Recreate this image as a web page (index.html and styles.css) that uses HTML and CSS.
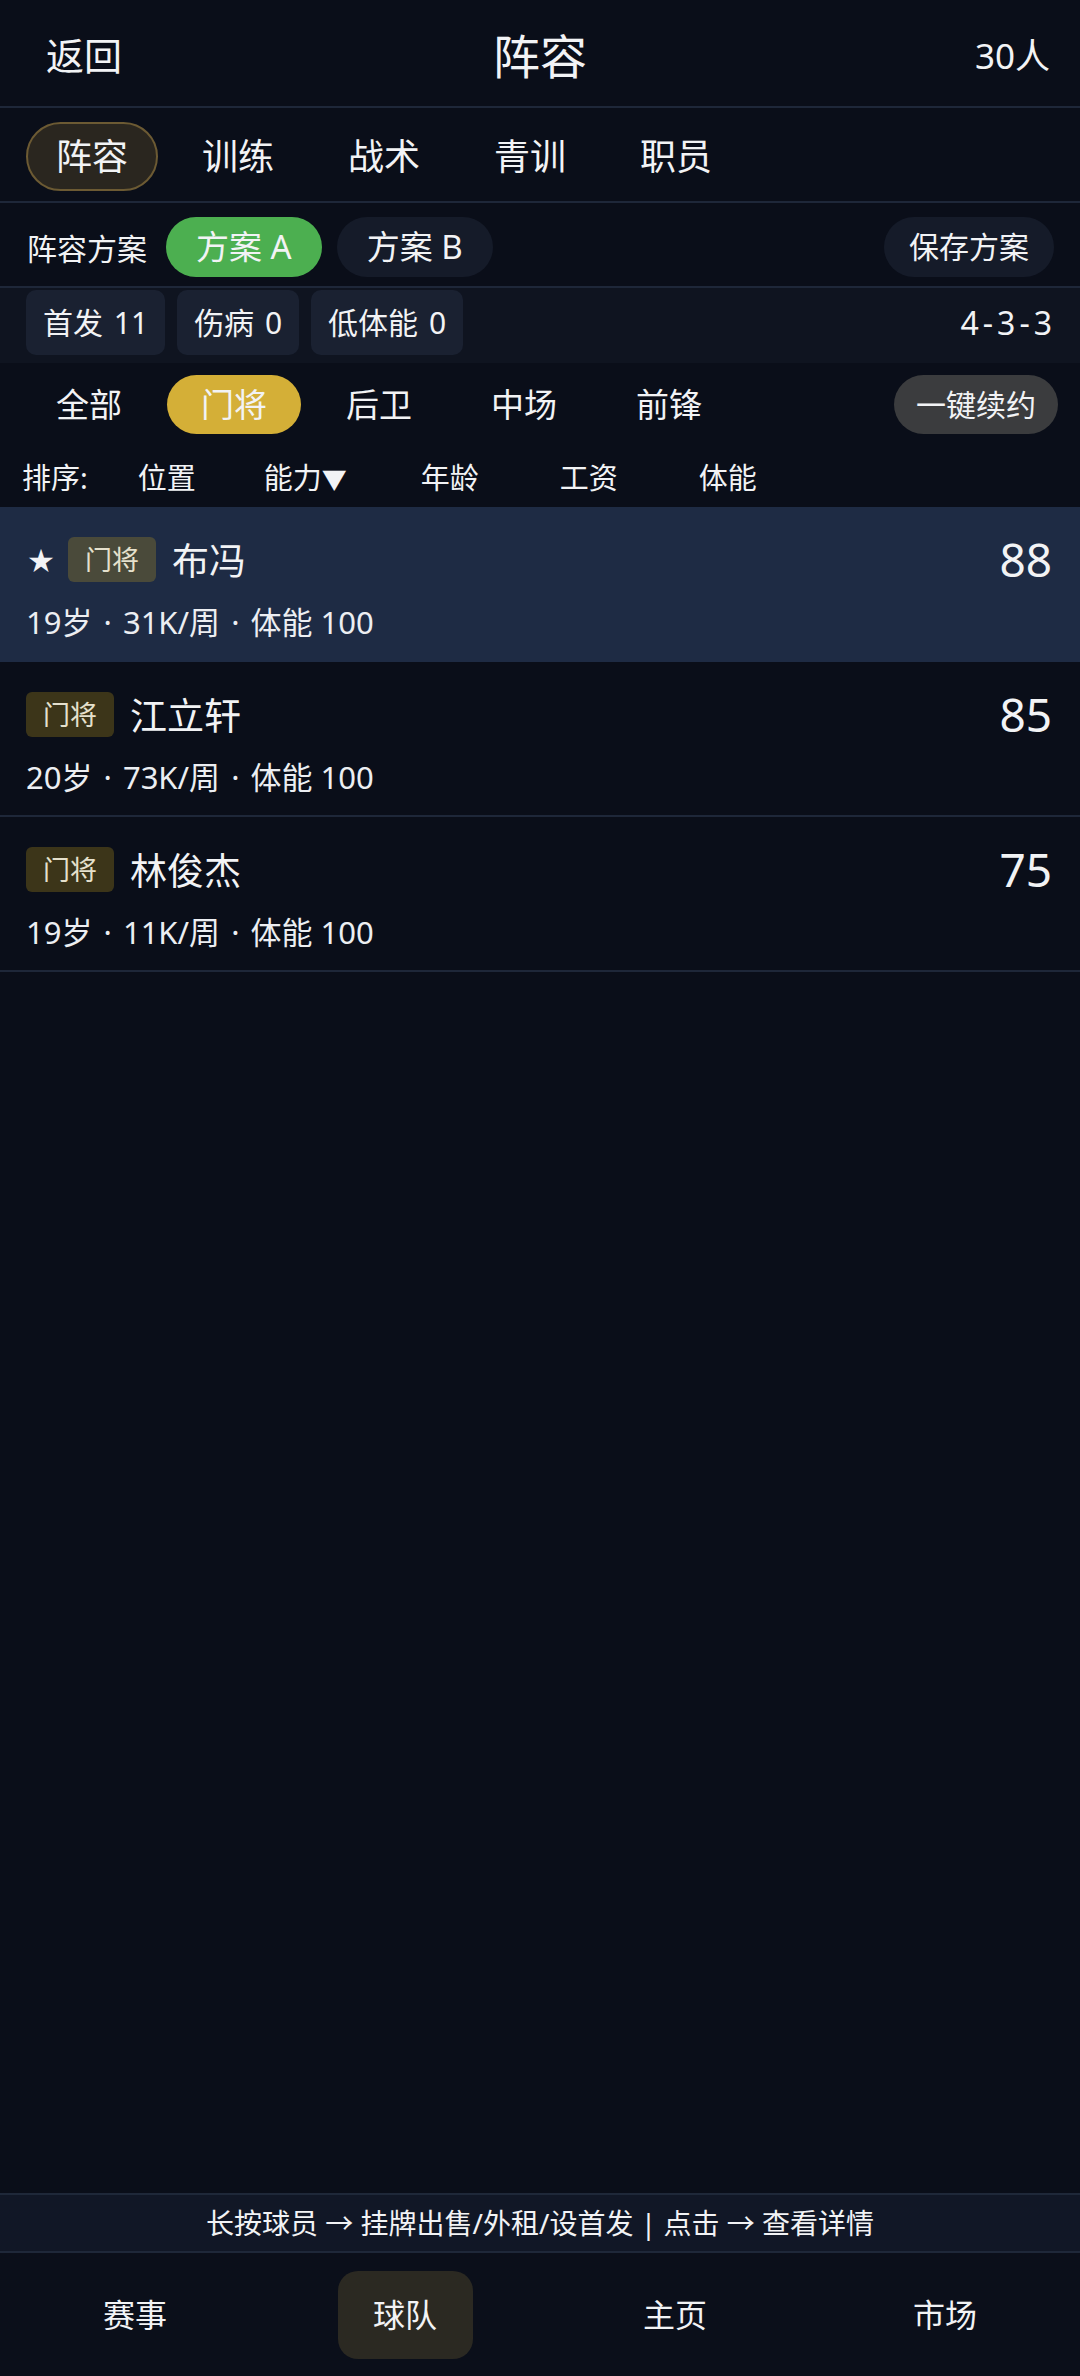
FILE: index.html
```html
<!DOCTYPE html>
<html lang="zh-CN">
<head>
    <meta charset="UTF-8">
    <meta name="viewport" content="width=device-width, initial-scale=1.0">
    <title>阵容</title>
    <link rel="stylesheet" href="styles.css">
</head>
<body>
    <div class="app">
        <!-- 顶部标题栏 -->
        <header class="topbar">
            <span class="back">返回</span>
            <span class="title">阵容</span>
            <span class="count">30人</span>
        </header>

        <!-- 功能标签 -->
        <nav class="tabs">
            <span class="tab active">阵容</span>
            <span class="tab">训练</span>
            <span class="tab">战术</span>
            <span class="tab">青训</span>
            <span class="tab">职员</span>
        </nav>

        <!-- 阵容方案 -->
        <div class="scheme-row">
            <span class="scheme-label">阵容方案</span>
            <span class="scheme-btn green">方案 A</span>
            <span class="scheme-btn">方案 B</span>
            <span class="spacer"></span>
            <span class="scheme-btn save">保存方案</span>
        </div>

        <!-- 统计 -->
        <div class="stats-row">
            <span class="chip">首发 11</span>
            <span class="chip">伤病 0</span>
            <span class="chip">低体能 0</span>
            <span class="spacer"></span>
            <span class="formation">4-3-3</span>
        </div>

        <!-- 位置筛选 -->
        <div class="filter-row">
            <span class="filter">全部</span>
            <span class="filter active">门将</span>
            <span class="filter">后卫</span>
            <span class="filter">中场</span>
            <span class="filter">前锋</span>
            <span class="spacer"></span>
            <span class="renew">一键续约</span>
        </div>

        <!-- 排序 -->
        <div class="sort-row">
            <span class="sort-label">排序:</span>
            <span class="sort-item">位置</span>
            <span class="sort-item current">能力<span class="arrow">▼</span></span>
            <span class="sort-item">年龄</span>
            <span class="sort-item wide">工资</span>
            <span class="sort-item wide">体能</span>
        </div>

        <!-- 球员列表 -->
        <div class="player-list">
            <div class="player selected">
                <div class="player-main">
                    <span class="star">★</span>
                    <span class="pos-tag">门将</span>
                    <span class="name">布冯</span>
                    <span class="spacer"></span>
                    <span class="rating">88</span>
                </div>
                <div class="player-info">19岁 <span class="dot">·</span> 31K/周 <span class="dot">·</span> 体能 100</div>
            </div>
            <div class="player">
                <div class="player-main">
                    <span class="pos-tag">门将</span>
                    <span class="name">江立轩</span>
                    <span class="spacer"></span>
                    <span class="rating">85</span>
                </div>
                <div class="player-info">20岁 <span class="dot">·</span> 73K/周 <span class="dot">·</span> 体能 100</div>
            </div>
            <div class="player">
                <div class="player-main">
                    <span class="pos-tag">门将</span>
                    <span class="name">林俊杰</span>
                    <span class="spacer"></span>
                    <span class="rating">75</span>
                </div>
                <div class="player-info">19岁 <span class="dot">·</span> 11K/周 <span class="dot">·</span> 体能 100</div>
            </div>
        </div>

        <!-- 操作提示 -->
        <div class="hint">长按球员 → 挂牌出售/外租/设首发 | 点击 → 查看详情</div>

        <!-- 底部导航 -->
        <footer class="bottom-nav">
            <span class="nav-item">赛事</span>
            <span class="nav-item active">球队</span>
            <span class="nav-item">主页</span>
            <span class="nav-item">市场</span>
        </footer>
    </div>
</body>
</html>
```

FILE: styles.css
```css
* {
    box-sizing: border-box;
}
body {
    margin: 0;
    font-family: "Noto Sans", "Noto Sans CJK SC", sans-serif;
    background-color: #0a0e19;
    color: #f2f3f5;
}
.app {
    display: flex;
    flex-direction: column;
    height: 100vh;
}
.spacer {
    flex: 1;
}
.topbar {
    height: 108px;
    display: flex;
    align-items: center;
    justify-content: space-between;
    padding: 0 30px 0 46px;
    border-bottom: 2px solid #1e2739;
    position: relative;
}
.back {
    font-size: 38px;
}
.title {
    position: absolute;
    left: 50%;
    transform: translateX(-50%);
    font-size: 47px;
}
.count {
    font-size: 35px;
}
.tabs {
    display: flex;
    gap: 14px;
    padding: 14px 26px 10px;
    border-bottom: 2px solid #1e2739;
}
.tab {
    height: 69px;
    line-height: 65px;
    padding: 0 28px;
    font-size: 36px;
    border: 2px solid transparent;
    border-radius: 35px;
}
.tab.active {
    background-color: #2a261f;
    border-color: #6c5a33;
}
.scheme-row {
    display: flex;
    align-items: center;
    gap: 15px;
    padding: 14px 26px 9px 27px;
    border-bottom: 2px solid #1e2739;
}
.scheme-label {
    font-size: 30px;
    margin-right: 4px;
}
.scheme-btn {
    height: 60px;
    line-height: 60px;
    padding: 0 30px;
    font-size: 33px;
    border-radius: 30px;
    background-color: #151b29;
}
.scheme-btn.green {
    background-color: #4caf50;
}
.scheme-btn.save {
    font-size: 30px;
    padding: 0 25px;
}
.stats-row {
    display: flex;
    align-items: center;
    gap: 12px;
    padding: 2px 28px 8px 26px;
    background-color: #0f1420;
}
.chip {
    height: 65px;
    line-height: 65px;
    padding: 0 17px;
    font-size: 30px;
    word-spacing: 3px;
    border-radius: 10px;
    background-color: #1a2131;
}
.formation {
    font-size: 32px;
    letter-spacing: 4px;
    margin-right: -4px;
}
.filter-row {
    display: flex;
    align-items: center;
    gap: 11px;
    padding: 12px 22px 10px 22px;
}
.filter {
    height: 59px;
    line-height: 59px;
    padding: 0 34px;
    font-size: 33px;
    border-radius: 30px;
}
.filter.active {
    background-color: #d4af37;
}
.renew {
    height: 59px;
    line-height: 59px;
    padding: 0 22px;
    font-size: 30px;
    border-radius: 30px;
    background-color: #3b3c3e;
}
.sort-row {
    height: 63px;
    display: flex;
    align-items: center;
    gap: 68px;
    padding: 0 22px;
    font-size: 29px;
}
.sort-label {
    margin-right: -18px;
}
.sort-item .arrow {
    font-size: 25px;
}
.sort-item.current {
    margin-right: 6px;
}
.sort-item.wide {
    margin-left: 13px;
}
.player-list {
    flex: 1;
}
.player {
    height: 155px;
    padding: 28px 28px 0 26px;
    border-bottom: 2px solid #1e2739;
}
.player.selected {
    background-color: #1e2b44;
    border-bottom-color: #1e2b44;
}
.player-main {
    height: 48px;
    display: flex;
    align-items: center;
}
.star {
    font-size: 26px;
    margin: 0 14px 0 2px;
}
.pos-tag {
    height: 45px;
    line-height: 45px;
    padding: 0 17px;
    font-size: 27px;
    color: #e5e0cc;
    border-radius: 6px;
    background-color: #3c3519;
}
.selected .pos-tag {
    background-color: #4a4a3a;
}
.name {
    margin-left: 16px;
    font-size: 37px;
}
.rating {
    font-size: 46px;
}
.player-info {
    margin-top: 18px;
    line-height: 42px;
    font-size: 31px;
    color: #eceef2;
}
.player-info .dot {
    margin: 0 3px;
}
.hint {
    height: 60px;
    line-height: 56px;
    text-align: center;
    font-size: 28px;
    background-color: #111726;
    border-top: 2px solid #1f2839;
    border-bottom: 2px solid #1f2839;
}
.bottom-nav {
    height: 123px;
    display: grid;
    grid-template-columns: repeat(4, 1fr);
    align-items: center;
    justify-items: center;
    background-color: #0b0f1a;
}
.nav-item {
    width: 135px;
    height: 88px;
    line-height: 88px;
    text-align: center;
    font-size: 32px;
    border-radius: 20px;
}
.nav-item.active {
    background-color: #2b2922;
}
```
